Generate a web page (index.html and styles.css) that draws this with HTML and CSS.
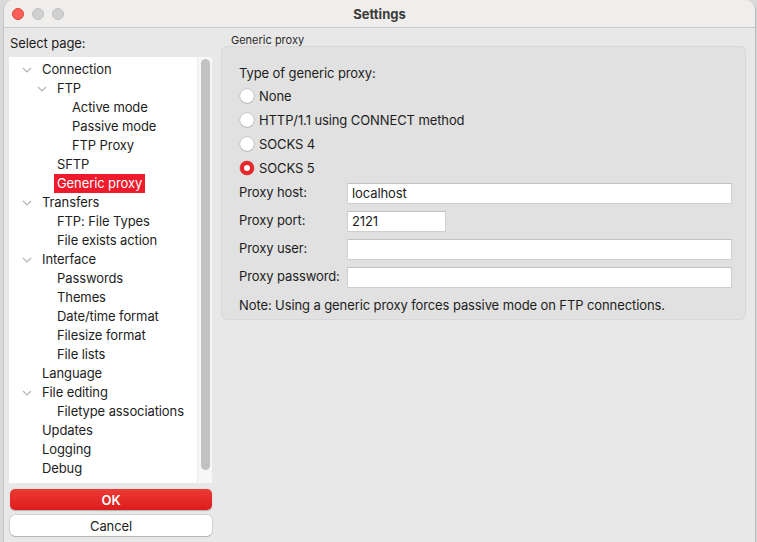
FILE: index.html
```html
<!DOCTYPE html>
<html>
<head>
<meta charset="utf-8">
<link rel="stylesheet" href="styles.css">
</head>
<body>
<div class="window">
  <div class="titlebar">
    <div class="lights">
      <span class="light red"></span>
      <span class="light gray"></span>
      <span class="light gray"></span>
    </div>
    <div class="title">Settings</div>
  </div>
  <div class="content">
    <div class="left">
      <div class="select-label">Select page:</div>
      <div class="tree">
        <div class="tree-list">
          <div class="row l0"><span class="chev"><svg width="10" height="6" viewBox="0 0 10 6"><path d="M1 1 L5 5 L9 1" fill="none" stroke="#b5b5b5" stroke-width="1.2"/></svg></span><span class="txt">Connection</span></div>
          <div class="row l1"><span class="chev"><svg width="10" height="6" viewBox="0 0 10 6"><path d="M1 1 L5 5 L9 1" fill="none" stroke="#b5b5b5" stroke-width="1.2"/></svg></span><span class="txt">FTP</span></div>
          <div class="row l2"><span class="txt">Active mode</span></div>
          <div class="row l2"><span class="txt">Passive mode</span></div>
          <div class="row l2"><span class="txt">FTP Proxy</span></div>
          <div class="row l1n"><span class="txt">SFTP</span></div>
          <div class="row l1n"><span class="txt sel">Generic proxy</span></div>
          <div class="row l0"><span class="chev"><svg width="10" height="6" viewBox="0 0 10 6"><path d="M1 1 L5 5 L9 1" fill="none" stroke="#b5b5b5" stroke-width="1.2"/></svg></span><span class="txt">Transfers</span></div>
          <div class="row l1n"><span class="txt">FTP: File Types</span></div>
          <div class="row l1n"><span class="txt">File exists action</span></div>
          <div class="row l0"><span class="chev"><svg width="10" height="6" viewBox="0 0 10 6"><path d="M1 1 L5 5 L9 1" fill="none" stroke="#b5b5b5" stroke-width="1.2"/></svg></span><span class="txt">Interface</span></div>
          <div class="row l1n"><span class="txt">Passwords</span></div>
          <div class="row l1n"><span class="txt">Themes</span></div>
          <div class="row l1n"><span class="txt">Date/time format</span></div>
          <div class="row l1n"><span class="txt">Filesize format</span></div>
          <div class="row l1n"><span class="txt">File lists</span></div>
          <div class="row l0n"><span class="txt">Language</span></div>
          <div class="row l0"><span class="chev"><svg width="10" height="6" viewBox="0 0 10 6"><path d="M1 1 L5 5 L9 1" fill="none" stroke="#b5b5b5" stroke-width="1.2"/></svg></span><span class="txt">File editing</span></div>
          <div class="row l1n"><span class="txt">Filetype associations</span></div>
          <div class="row l0n"><span class="txt">Updates</span></div>
          <div class="row l0n"><span class="txt">Logging</span></div>
          <div class="row l0n"><span class="txt">Debug</span></div>
        </div>
        <div class="scrollbar"><div class="thumb"></div></div>
      </div>
      <div class="btn ok">OK</div>
      <div class="btn cancel">Cancel</div>
    </div>
    <div class="right">
      <div class="group-title">Generic proxy</div>
      <div class="group">
        <div class="type-label">Type of generic proxy:</div>
        <div class="radio-row"><span class="radio"></span><span>None</span></div>
        <div class="radio-row"><span class="radio"></span><span>HTTP/1.1 using CONNECT method</span></div>
        <div class="radio-row"><span class="radio"></span><span>SOCKS 4</span></div>
        <div class="radio-row"><span class="radio on"></span><span>SOCKS 5</span></div>
        <div class="fields">
          <div class="field-label">Proxy host:</div>
          <div class="input">localhost</div>
          <div class="field-label">Proxy port:</div>
          <div class="input short">2121</div>
          <div class="field-label">Proxy user:</div>
          <div class="input"></div>
          <div class="field-label">Proxy password:</div>
          <div class="input"></div>
        </div>
        <div class="note">Note: Using a generic proxy forces passive mode on FTP connections.</div>
      </div>
    </div>
  </div>
</div>
</body>
</html>
```

FILE: styles.css
```css
html, body {
  margin: 0;
  padding: 0;
}
body {
  background: #d9d9d9;
  width: 757px;
  height: 542px;
  overflow: hidden;
  font-family: "Inter", "Liberation Sans", sans-serif;
  font-size: 13px;
  letter-spacing: -0.1px;
  color: #1d1d1d;
}
.window {
  margin-left: 3px;
  width: 751px;
  height: 542px;
  background: #e8e8e8;
  border-left: 1px solid #c4c4c4;
  border-right: 1px solid #b8b8b8;
  border-radius: 10px 10px 0 0;
  overflow: hidden;
}
.titlebar {
  height: 28px;
  background: #efeeec;
  border-bottom: 1px solid #cbcbcb;
  box-sizing: border-box;
  position: relative;
  display: flex;
  align-items: center;
  justify-content: center;
}
.lights {
  position: absolute;
  left: 8px;
  top: 8px;
  display: flex;
  gap: 8px;
}
.light {
  width: 12px;
  height: 12px;
  border-radius: 50%;
  box-sizing: border-box;
}
.light.red {
  background: #fe5f57;
  border: 0.5px solid #e0443e;
}
.light.gray {
  background: #d0d0d0;
  border: 0.5px solid #c2c2c2;
}
.title {
  font-weight: 700;
  font-size: 13px;
  color: #3b3b3b;
  letter-spacing: 0;
}
.content {
  display: flex;
  padding-left: 5px;
}
.left {
  width: 203px;
  display: flex;
  flex-direction: column;
}
.select-label {
  height: 29px;
  line-height: 31px;
  padding-left: 1px;
}
.tree {
  height: 426px;
  display: flex;
  background: #ffffff;
}
.tree-list {
  flex: 1;
  padding-top: 3px;
}
.row {
  height: 19px;
  display: flex;
  align-items: center;
  white-space: nowrap;
}
.chev {
  width: 10px;
  height: 6px;
  display: flex;
  margin-right: 7px;
}
.row.l0 { padding-left: 13px; }
.row.l0n { padding-left: 30px; }
.row.l1 { padding-left: 28px; }
.row.l1n { padding-left: 45px; }
.row.l2 { padding-left: 60px; }
.txt {
  padding: 0 3px;
  line-height: 19px;
}
.txt.sel {
  background: #ef1a2c;
  color: #ffffff;
}
.scrollbar {
  width: 14px;
  background: #f7f7f7;
  border-left: 1px solid #ececec;
  display: flex;
  justify-content: center;
  padding-top: 2px;
}
.thumb {
  width: 9px;
  height: 411px;
  background: #c2c2c2;
  border-radius: 5px;
}
.btn {
  height: 21px;
  border-radius: 5px;
  box-sizing: border-box;
  display: flex;
  align-items: center;
  justify-content: center;
  margin-left: 1px;
}
.btn.ok {
  margin-top: 6px;
  background: linear-gradient(#ec3b35, #dc1c1c);
  color: #ffffff;
  font-weight: 600;
  box-shadow: 0 0.5px 1px rgba(0,0,0,0.25);
}
.btn.cancel {
  margin-top: 5px;
  background: #ffffff;
  color: #222;
  box-shadow: 0 0 0 0.5px rgba(0,0,0,0.18), 0 1px 1px rgba(0,0,0,0.15);
}
.right {
  margin-left: 9px;
  width: 525px;
}
.group-title {
  font-size: 11px;
  letter-spacing: 0;
  height: 18px;
  line-height: 24px;
  padding-left: 10px;
  color: #2a2a2a;
}
.group {
  background: #e1e1e1;
  border: 1px solid #d7d7d7;
  border-radius: 6px;
  height: 274px;
  box-sizing: border-box;
  padding: 18px 12px 0 17px;
}
.type-label {
  height: 19px;
  line-height: 16px;
}
.radio-row {
  height: 24px;
  display: flex;
  align-items: center;
}
.radio {
  width: 14px;
  height: 14px;
  border-radius: 50%;
  background: #ffffff;
  box-sizing: border-box;
  box-shadow: 0 0 0 0.5px rgba(0,0,0,0.2), 0 0.5px 1px rgba(0,0,0,0.2);
  margin-left: 1px;
  margin-right: 5px;
  position: relative;
}
.radio.on {
  background: #e8262a;
  box-shadow: 0 0 0 0.5px rgba(180,0,0,0.4);
}
.radio.on::after {
  content: "";
  position: absolute;
  width: 6px;
  height: 6px;
  border-radius: 50%;
  background: #ffffff;
  left: 4px;
  top: 4px;
}
.fields {
  display: grid;
  grid-template-columns: 108px 385px;
  row-gap: 7px;
  margin-top: 3px;
  align-items: center;
}
.field-label {
  line-height: 18px;
  margin-top: -4px;
}
.input {
  height: 21px;
  background: #ffffff;
  box-sizing: border-box;
  border: 1px solid #cfcfcf;
  border-top-color: #c2c2c2;
  padding-left: 4px;
  line-height: 19px;
}
.input.short {
  width: 99px;
}
.note {
  margin-top: 9px;
}
```
